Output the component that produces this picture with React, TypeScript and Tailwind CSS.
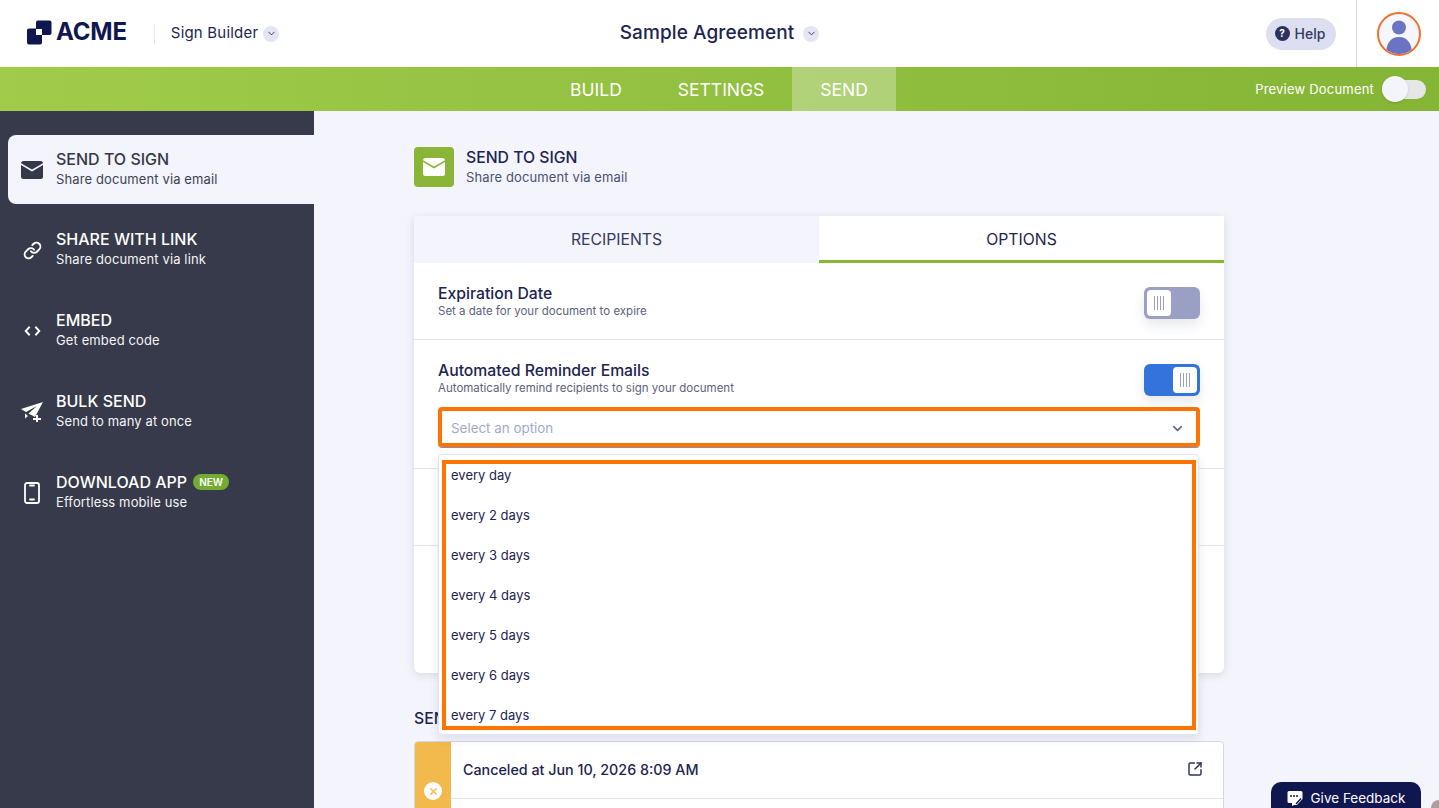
import { ChevronDown, Link, SquareArrowOutUpRight, X } from "lucide-react";

const options = ["every day", "every 2 days", "every 3 days", "every 4 days", "every 5 days", "every 6 days", "every 7 days"];

function Mail({ className, flap }: { className?: string; flap: string }) {
  return (
    <svg viewBox="0 0 22 18" className={className}>
      <rect x="0" y="0" width="22" height="18" rx="2.5" fill="currentColor" />
      <path d="M-1 2.5 L11 9.5 L23 2.5" fill="none" stroke={flap} strokeWidth="1.6" />
    </svg>
  );
}

function CircleChevron() {
  return (
    <span className="flex h-4 w-4 items-center justify-center rounded-full bg-[#e3e5f3] text-[#2c3466]">
      <ChevronDown size={11} strokeWidth={2} />
    </span>
  );
}

function Grip() {
  return (
    <span className="flex gap-[2px]">
      <i className="h-[14px] w-px bg-[#9a9fc4]" />
      <i className="h-[14px] w-px bg-[#9a9fc4]" />
      <i className="h-[14px] w-px bg-[#9a9fc4]" />
      <i className="h-[14px] w-px bg-[#9a9fc4]" />
    </span>
  );
}

function Toggle({ on }: { on?: boolean }) {
  return (
    <div className={`mt-[3px] flex h-8 w-14 items-center rounded-md px-[3px] shadow-[0_6px_12px_rgba(60,65,110,0.12)] ${on ? "justify-end bg-[#3273dc]" : "justify-start bg-[#9a9fc4]"}`}>
      <span className="flex h-[26px] w-6 items-center justify-center rounded bg-white">
        <Grip />
      </span>
    </div>
  );
}

function SideItem({ icon, title, sub, active, badge }: { icon: React.ReactNode; title: string; sub: string; active?: boolean; badge?: boolean }) {
  return (
    <div className={`flex h-[69px] items-center rounded-l-lg pl-[13px] ${active ? "bg-[#f3f4fc] text-[#343848]" : "text-white"}`}>
      <span className="flex w-[22px] justify-center">{icon}</span>
      <div className="ml-[13px] -mt-[2px]">
        <div className="flex items-center gap-[6px] text-[16px] leading-[20px] font-medium">
          {title}
          {badge && <span className="rounded-full bg-[#73ac31] px-[6px] text-[10px] leading-[16px] font-semibold text-white">NEW</span>}
        </div>
        <div className="text-[13px] leading-[20px] tracking-[0.12px] opacity-95">{sub}</div>
      </div>
    </div>
  );
}

export default function App() {
  return (
    <div className="relative flex h-[808px] w-[1439px] flex-col overflow-hidden bg-[#f3f4fc] font-['Inter',sans-serif] text-[#1c2450]">
      {/* top header */}
      <header className="grid h-[67px] shrink-0 grid-cols-3 items-center bg-white pb-[3px]">
        <div className="flex items-center pl-[27px]">
          <div className="mb-[3px] flex items-center">
            <svg viewBox="0 0 25 25" className="h-[25px] w-[25px] text-[#0f1650]">
              <path d="M9 2.5a2 2 0 0 1 2-2h11.5a2 2 0 0 1 2 2V13a2 2 0 0 1-2 2H15V9H9z" fill="currentColor" />
              <path d="M0 10.5a2 2 0 0 1 2-2h7V15h6v7.5a2 2 0 0 1-2 2H2a2 2 0 0 1-2-2z" fill="currentColor" />
            </svg>
            <span className="ml-[4px] text-[24px] leading-none font-bold tracking-[-0.2px] text-[#0f1650]">ACME</span>
          </div>
          <span className="ml-[27px] h-5 w-px bg-[#e3e5f3]" />
          <span className="ml-4 text-[15px] tracking-[0.2px] text-[#1c2450]">Sign Builder</span>
          <span className="ml-[5px]"><CircleChevron /></span>
        </div>
        <div className="flex items-center justify-center gap-[9px]">
          <span className="text-[19px] tracking-[0.1px] font-medium">Sample Agreement</span>
          <CircleChevron />
        </div>
        <div className="flex h-full items-center justify-end">
          <div className="flex h-8 w-[70px] items-center justify-center gap-[5px] rounded-full bg-[#dcdff0] pr-[2px] text-[14px] font-medium text-[#343a60]">
            <span className="flex h-[15px] w-[15px] items-center justify-center rounded-full bg-[#2c3260] text-[10px] font-bold text-white">?</span>
            Help
          </div>
          <span className="ml-5 h-[67px] w-px self-start bg-[#d5d8ea]" />
          <div className="mr-[18px] ml-5 flex h-[44px] w-[44px] items-end justify-center overflow-hidden rounded-full border-2 border-[#f0702a] bg-[#f5f6fe]">
            <svg viewBox="0 0 40 40" className="h-10 w-10 text-[#6b74c2]">
              <circle cx="20" cy="13.5" r="7" fill="currentColor" />
              <path d="M7 40c0-11 5-17 13-17s13 6 13 17z" fill="currentColor" />
            </svg>
          </div>
        </div>
      </header>

      {/* green nav */}
      <nav className="relative flex h-[44px] shrink-0 items-center justify-center bg-gradient-to-r from-[#a0cb4b] to-[#85b535] pr-[1px] text-[17.5px] text-white">
        <span className="px-[28px] pt-[2px] leading-[42px]">BUILD</span>
        <span className="px-[28px] pt-[2px] leading-[42px]">SETTINGS</span>
        <span className="bg-white/30 px-[28px] pt-[2px] leading-[42px]">SEND</span>
        <div className="absolute right-[13px] flex items-center">
          <span className="mt-[2px] mr-2 text-[13px] tracking-[0.2px]">Preview Document</span>
          <span className="flex h-[19px] w-[44px] items-center rounded-full bg-[#e6e6e6]">
            <span className="h-[26px] w-[26px] rounded-full bg-[#f3f4fc] shadow" />
          </span>
        </div>
      </nav>

      <div className="flex min-h-0 flex-1">
        {/* sidebar */}
        <aside className="flex w-[314px] shrink-0 flex-col gap-[11.75px] bg-[#363a4a] pt-6 pl-2">
          <SideItem active title="SEND TO SIGN" sub="Share document via email" icon={<Mail className="h-[18px] w-[22px]" flap="#f3f4fc" />} />
          <SideItem title="SHARE WITH LINK" sub="Share document via link" icon={<Link size={19} strokeWidth={2.4} />} />
          <SideItem title="EMBED" sub="Get embed code" icon={
            <svg viewBox="0 0 18 12" className="h-3 w-[17px]" fill="none" stroke="currentColor" strokeWidth="2">
              <path d="M6 1.5 1.8 6 6 10.5M12 1.5 16.2 6 12 10.5" />
            </svg>
          } />
          <SideItem title="BULK SEND" sub="Send to many at once" icon={
            <svg viewBox="0 0 22 20" className="h-5 w-[22px]" fill="currentColor">
              <path d="M22 0 0 7l5 3 11-6-8.500 7.500L14 15z" />
              <path d="M4 11.500v5l3-2.500z" />
              <path d="M15 13h2v3h3v2h-3v3h-2v-3h-3v-2h3z" />
            </svg>
          } />
          <SideItem badge title="DOWNLOAD APP" sub="Effortless mobile use" icon={
            <svg viewBox="0 0 16 22" className="h-[22px] w-4" fill="none" stroke="currentColor" strokeWidth="1.8">
              <rect x="1" y="1" width="14" height="20" rx="2" />
              <path d="M6 3.500h4M6 17.500h4" strokeLinecap="round" />
            </svg>
          } />
        </aside>

        {/* main */}
        <main className="min-w-0 flex-1 pt-9 pl-[100px]">
          <div className="flex h-10 items-center gap-3">
            <span className="flex h-10 w-10 items-center justify-center rounded bg-[#8ab537] text-white">
              <Mail className="h-[18px] w-[22px]" flap="#8ab537" />
            </span>
            <div>
              <div className="text-[15.75px] leading-[21px] font-medium">SEND TO SIGN</div>
              <div className="text-[13px] leading-[19px] tracking-[0.12px] text-[#4d5270]">Share document via email</div>
            </div>
          </div>

          {/* options card */}
          <div className="relative mt-[29px] h-[457px] w-[810px] rounded-b-md bg-white shadow-[0_2px_8px_rgba(60,65,110,0.15)]">
            <div className="grid h-[47px] grid-cols-2 text-[15.75px]">
              <div className="flex items-center justify-center bg-[#f3f4fc] pt-[1px] text-[#343a60]">RECIPIENTS</div>
              <div className="flex items-center justify-center border-b-[3px] border-[#8ab537] bg-white pt-[3px] text-[#1c2450]">OPTIONS</div>
            </div>
            <div className="flex h-[77px] items-start justify-between border-b border-[#e3e4ef] px-6 pt-[21px]">
              <div>
                <div className="text-[15.75px] leading-[20px] font-medium">Expiration Date</div>
                <div className="text-[11.5px] leading-[15px] text-[#5d6280]">Set a date for your document to expire</div>
              </div>
              <Toggle />
            </div>
            <div className="h-[129px] border-b border-[#e3e4ef] px-6 pt-[21px]">
              <div className="flex items-start justify-between">
                <div>
                  <div className="text-[15.75px] leading-[20px] font-medium">Automated Reminder Emails</div>
                  <div className="text-[11.5px] leading-[15px] text-[#5d6280]">Automatically remind recipients to sign your document</div>
                </div>
                <Toggle on />
              </div>
              <div className="mt-[11px] flex h-10 items-center justify-between rounded-sm border-4 border-[#ff7300] pt-[2px] pr-[11px] pl-[9px] text-[13.4px] text-[#a3a8cb] shadow-[0_1px_0_#8a8fb0]">
                Select an option
                <ChevronDown size={15} strokeWidth={2.5} className="text-[#5d6290]" />
              </div>
            </div>
            <div className="h-[77px] border-b border-[#e3e4ef]" />

            {/* open dropdown */}
            <div className="absolute top-[238px] left-[24px] z-10 h-[281px] w-[761px] rounded border border-[#e3e4f3] bg-white pt-[1px] shadow-[0_4px_10px_rgba(60,65,110,0.12)]">
              <div className="absolute top-[5px] right-[2px] bottom-[4px] left-[3px] border-4 border-[#ff7300]" />
              {options.map((o) => (
                <div key={o} className="flex h-10 items-center pl-[12px] text-[13px] text-[#1c2450]">
                  {o}
                </div>
              ))}
            </div>
          </div>

          {/* send history */}
          <div className="mt-[36px] text-[15.75px] leading-[20px] font-medium">SEND HISTORY</div>
          <div className="mt-[12px] flex h-[120px] w-[810px] overflow-hidden rounded border border-[#d5d7e8] bg-white">
            <div className="flex w-[36px] shrink-0 items-start justify-center bg-[#f2b94d] pt-[40px]">
              <span className="flex h-[18px] w-[18px] items-center justify-center rounded-full bg-white text-[#f2b94d]">
                <X size={11} strokeWidth={3} />
              </span>
            </div>
            <div className="flex-1">
              <div className="flex h-[57px] items-center justify-between border-b border-[#e3e4ef] pr-5 pl-3 text-[14.3px] font-medium">
                Canceled at Jun 10, 2026 8:09 AM
                <SquareArrowOutUpRight size={16} strokeWidth={2.2} className="-mt-[2px] text-[#2c3260]" />
              </div>
            </div>
          </div>
        </main>
      </div>

      {/* feedback button */}
      <div className="absolute top-[782px] left-[1271px] flex h-10 w-[150px] items-start justify-center gap-2 rounded-t-[10px] bg-[#0f1650] pt-[6px] text-[13.5px] text-white">
        <svg viewBox="0 0 16 16" className="mt-[2px] h-4 w-4">
          <path d="M2 1h12a1.500 1.500 0 0 1 1.500 1.500V9L10 15H7l-2 1v-3H2A1.500 1.500 0 0 1 .5 11.500v-9A1.500 1.500 0 0 1 2 1z" fill="#fff" />
          <circle cx="4" cy="6" r="1" fill="#0f1650" />
          <circle cx="7" cy="6" r="1" fill="#0f1650" />
          <circle cx="10" cy="6" r="1" fill="#0f1650" />
          <path d="m9 14 5-5.500" stroke="#0f1650" strokeWidth="1.500" />
        </svg>
        Give Feedback
      </div>
      <span className="absolute -right-[8px] -bottom-[8px] h-4 w-4 rounded-full bg-[#b59a9c]" />
    </div>
  );
}
